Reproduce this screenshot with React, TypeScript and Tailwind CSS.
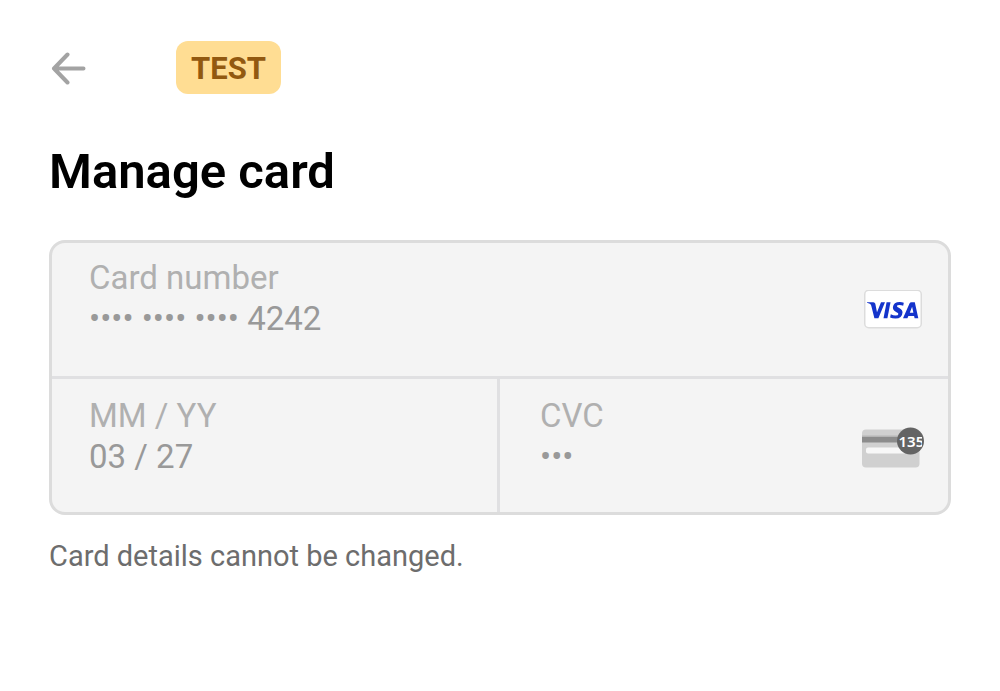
import React from "react";

type FieldProps = {
  id: string;
  label: string;
  value: string;
  className?: string;
  children?: React.ReactNode;
};

function Field({ id, label, value, className = "", children }: FieldProps) {
  return (
    <div className={`flex min-w-0 items-center ${className}`}>
      <div className="flex min-w-0 flex-1 flex-col">
        <label htmlFor={id} className="text-[33px] leading-[40px] text-[#b0b0b0]">
          {label}
        </label>
        <input
          id={id}
          value={value}
          readOnly
          className="h-[41px] w-full bg-transparent p-0 text-[33px] leading-[41px] text-[#999999] outline-none"
        />
      </div>
      {children}
    </div>
  );
}

function BackArrow() {
  return (
    <svg width="36" height="34" viewBox="0 0 36 34" fill="none" stroke="#a3a3a3" strokeWidth="4" strokeLinecap="round" strokeLinejoin="round" aria-hidden="true">
      <path d="M33.5 17.5H4M17.5 3.5L4 17.5L17.5 31.5" />
    </svg>
  );
}

function VisaLogo() {
  return (
    <svg width="58" height="40" viewBox="0 0 58 40" className="mt-[22px] shrink-0" role="img" aria-label="Visa">
      <rect x="0.75" y="0.25" width="56.5" height="37.5" rx="4" fill="#fff" stroke="#dcdcdc" strokeWidth="1.5" />
      <g fill="#1434cb">
        <path d="M3 12.3H9.3Q10.9 12.3 11.3 13.8L13 22.2L17 12.3H21L14.4 28.3H10.4L7.2 15.5Q6.9 14.3 5.8 13.8Q4.5 13.1 2.9 12.8Z" />
        <path d="M22.6 12.3H26.5L23.4 28.3H19.5Z" />
        <path d="M39.8 12.7L39.2 15.8Q37.4 14.9 35.5 14.9Q33 14.9 32.9 16.1Q32.9 16.9 35.2 18Q38.6 19.6 38.5 22.6Q38.2 28.6 31.5 28.6Q28.3 28.6 26.1 27.5L26.8 24.2Q29.3 25.5 31.5 25.5Q34.3 25.5 34.4 24Q34.4 23 32.1 21.9Q28.8 20.3 28.9 17.3Q29.4 12 35.9 12Q38 12 39.8 12.7Z" />
        <path fillRule="evenodd" d="M39 28.3L45.5 13.6Q46.1 12.3 47.5 12.3H50.8L54.3 28.3H50.6L50.1 25.9H44.4L43.4 28.3ZM45.8 22.8H49.4L48.1 16.8Z" />
      </g>
    </svg>
  );
}

function CvcIcon() {
  return (
    <svg width="62" height="41" viewBox="0 -1 62 41" className="mt-[21px] shrink-0" aria-hidden="true">
      <defs>
        <clipPath id="badge-digits">
          <rect x="36" y="0" width="24" height="27" />
        </clipPath>
      </defs>
      <rect x="0" y="1.5" width="57.5" height="38" rx="4" fill="#d0d0d0" />
      <path d="M0 7.5H44V9H0Z" fill="#b5b5b5" />
      <path d="M0 9H44V14.5H0Z" fill="#8c8c8c" />
      <rect x="4" y="19.5" width="40" height="6" rx="2" fill="#f7f7f7" />
      <circle cx="48.5" cy="13" r="13.5" fill="#646464" />
      <text x="36.5" y="19" clipPath="url(#badge-digits)" fontFamily="Noto Sans, sans-serif" fontWeight="600" fontSize="15" fill="#fff">
        135
      </text>
    </svg>
  );
}

export default function App() {
  return (
    <main className="min-h-screen bg-white px-[49px] pt-[41px] pb-10 font-[Roboto,sans-serif]">
      <header className="flex items-center gap-[90px]">
        <button type="button" aria-label="Back" className="py-2 pl-[1px]">
          <BackArrow />
        </button>
        <span className="rounded-[12px] bg-[#ffdd93] px-[15px] pt-[9px] pb-[7px] text-[31px] leading-[37px] font-bold text-[#925910]">
          TEST
        </span>
      </header>

      <h1 className="mt-12 text-[49px] leading-[60px] font-semibold text-black">Manage card</h1>

      <form className="mt-[38px] overflow-hidden rounded-[16px] border-[3px] border-[#dcdcdc] bg-[#f4f4f4]">
        <Field id="card-number" label="Card number" value="•••• •••• •••• 4242" className="pt-[15px] pr-[26px] pb-[37px] pl-[37px]">
          <VisaLogo />
        </Field>
        <div className="grid grid-cols-2 border-t-[3px] border-[#e0e0e2]">
          <Field id="expiry" label="MM / YY" value="03 / 27" className="border-r-[3px] border-[#e0e0e2] pt-[17px] pr-6 pb-[35px] pl-[37px]" />
          <Field id="cvc" label="CVC" value="•••" className="pt-[17px] pr-6 pb-[35px] pl-10">
            <CvcIcon />
          </Field>
        </div>
      </form>

      <p className="mt-[23px] text-[29px] leading-[36px] text-[#6d6d6d]">Card details cannot be changed.</p>
    </main>
  );
}
